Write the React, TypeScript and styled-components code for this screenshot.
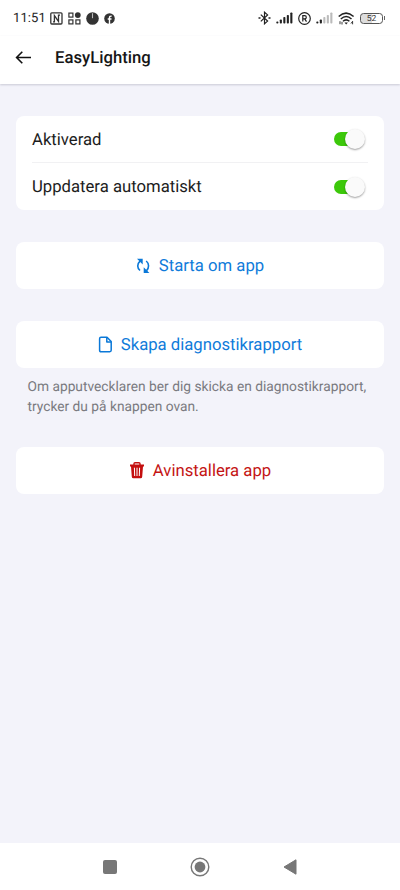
import React from "react";
import styled, { createGlobalStyle } from "styled-components";

const GlobalStyle = createGlobalStyle`
  * { box-sizing: border-box; }
  body { margin: 0; background: #f3f3fa; font-family: Roboto, "Noto Sans", sans-serif; text-rendering: geometricPrecision; }
  svg { display: block; flex: none; }
`;

const Screen = styled.div`
  display: flex;
  flex-direction: column;
  width: 100%;
  height: 890px;
  background: #f3f3fa;
`;

const StatusBar = styled.div`
  display: flex;
  justify-content: space-between;
  align-items: center;
  height: 36px;
  padding: 0 15px 0 13px;
  background: #fff;
`;

const StatusGroup = styled.div<{ $gap: number }>`
  display: flex;
  align-items: center;
  gap: ${(p) => p.$gap}px;
`;

const Clock = styled.span`
  width: 32px;
  padding-top: 1px;
  font-size: 13px;
  line-height: 16px;
  letter-spacing: 0.1px;
  color: #252525;
  white-space: nowrap;
`;

const Header = styled.header`
  display: flex;
  align-items: center;
  gap: 23px;
  height: 48px;
  padding: 0 16px 5px 15px;
  background: #fff;
  box-shadow: 0 1px 2px rgba(40, 40, 70, 0.2);
`;

const Title = styled.h1`
  margin: 0;
  padding-top: 2px;
  font-size: 16.7px;
  font-weight: 500;
  line-height: 20px;
  color: #161616;
`;

const Content = styled.main`
  flex: 1;
  display: flex;
  flex-direction: column;
  padding: 31.5px 16px 0;
`;

const Card = styled.section`
  padding: 0 16px;
  border-radius: 8px;
  background: #fff;
`;

const SettingRow = styled.div<{ $divided?: boolean }>`
  display: flex;
  align-items: center;
  justify-content: space-between;
  height: ${(p) => (p.$divided ? 48 : 46.5)}px;
  border-top: ${(p) => (p.$divided ? "1px solid #f1f1f3" : "none")};
`;

const RowLabel = styled.span`
  padding-top: 4px;
  font-size: 16.7px;
  line-height: 20px;
  color: #1c1c1c;

  ${SettingRow} + ${SettingRow} & {
    padding-top: 3px;
  }
`;

const Toggle = styled.div`
  display: flex;
  align-items: center;
  justify-content: flex-end;
  width: 31px;
  height: 14px;
  margin-right: 3px;
  border-radius: 7px;
  background: linear-gradient(90deg, #3cc80a 0 20px, transparent 20px);
`;

const Knob = styled.span`
  width: 20px;
  height: 20px;
  border-radius: 50%;
  background: #fafafa;
  box-shadow: 0 1px 2px rgba(0, 0, 0, 0.38);
`;

const ActionButton = styled.button<{ $danger?: boolean; $top: number }>`
  display: flex;
  align-items: center;
  justify-content: center;
  gap: 8px;
  height: 47px;
  margin-top: ${(p) => p.$top}px;
  padding: 0;
  border: 0;
  border-radius: 8px;
  background: #fff;
  color: ${(p) => (p.$danger ? "#c41414" : "#0f7bda")};
  font: 400 16.7px/20px Roboto, sans-serif;
  text-rendering: inherit;
`;

const ActionLabel = styled.span`
  padding-top: 2px;
`;

const Hint = styled.p`
  margin: 9px 0 0 11.5px;
  font-size: 13.75px;
  line-height: 20px;
  color: #7a7a80;
  white-space: nowrap;
`;

const NavBar = styled.nav`
  display: grid;
  grid-template-columns: repeat(3, 90px);
  justify-content: center;
  justify-items: center;
  align-items: center;
  height: 47px;
  background: #fff;
`;

const NfcIcon = () => (
  <svg width="13" height="13" viewBox="0 0 13 13" fill="none" stroke="#333" strokeWidth="1.3">
    <rect x="0.8" y="0.8" width="11.2" height="11.2" rx="1" />
    <path d="M3 9.9h1.4V3.6l4.1 5.8V3.1H10" strokeWidth="1.3" />
  </svg>
);

const AppsIcon = () => (
  <svg width="13" height="13" viewBox="0 0 13 13" fill="none" stroke="#333" strokeWidth="1.2">
    <rect x="0.9" y="1.1" width="4" height="4" />
    <rect x="0.9" y="7.9" width="4" height="4" />
    <rect x="7.9" y="7.9" width="4" height="4" />
    <circle cx="9.8" cy="3.1" r="2.9" fill="#333" stroke="none" />
  </svg>
);

const DialIcon = () => (
  <svg width="13" height="13" viewBox="0 0 13 13">
    <circle cx="6.5" cy="6.5" r="6.3" fill="#333" />
    <path d="M6.5 1.2v5" stroke="#bbb" strokeWidth="1.1" />
  </svg>
);

const FacebookIcon = () => (
  <svg width="11" height="11" viewBox="0 0 11 11">
    <circle cx="5.5" cy="5.5" r="5.3" fill="#333" />
    <path d="M5.5 11V4.6Q5.5 3 7.7 3.1M3.7 6h3.8" fill="none" stroke="#fff" strokeWidth="1.4" />
  </svg>
);

const BluetoothIcon = () => (
  <svg width="13" height="14" viewBox="0 0 13 14" fill="none" stroke="#222" strokeWidth="1.2">
    <path d="M2.8 3.6l6.8 6.5-3.1 2.7V1.2l3.1 2.7-6.8 6.5" />
    <path d="M0.5 7h2M10.5 7h2" strokeWidth="1.7" />
  </svg>
);

const SignalIcon = ({ strength }: { strength: number }) => (
  <svg width="17" height="12" viewBox="0 0 17 12">
    {[2, 4, 6.5, 8.5, 11].map((h, i) => (
      <rect key={h} x={0.3 + i * 3.5} y={11.5 - h} width="2.1" height={h} rx="0.8" fill={i < strength ? "#222" : "#bbb"} />
    ))}
  </svg>
);

const RegisteredIcon = () => (
  <svg width="13" height="13" viewBox="0 0 13 13" fill="none" stroke="#222">
    <circle cx="6.5" cy="6.5" r="5.8" strokeWidth="1.2" />
    <path d="M4.8 9.6V3.7h1.9a1.6 1.6 0 0 1 0 3.2H4.8M6.7 6.9l1.8 2.7" strokeWidth="1.2" />
  </svg>
);

const WifiIcon = () => (
  <svg width="17" height="13" viewBox="0 0 17 13" fill="none" stroke="#222" strokeWidth="1.5">
    <path d="M0.7 4.5Q8 -2.2 15.6 4.5M2.8 7Q8.2 2 13.5 7M5 9.3q3.2-2.8 6.4 0" />
    <path d="M6.5 10.5h3.4l-1.7 2z" fill="#222" stroke="none" />
    <path d="M2 9.2v3M4 9.8v2.7M13 11.5l1.6-2.2v3" strokeWidth="0.9" />
  </svg>
);

const BatteryFrame = styled.div`
  display: flex;
  align-items: center;
  gap: 1px;
`;

const BatteryBody = styled.span`
  width: 23px;
  height: 11px;
  border: 1px solid #555;
  border-radius: 3.5px;
  background: linear-gradient(90deg, #ddd 52%, #fff 52%);
  color: #333;
  font-size: 8.5px;
  line-height: 10px;
  text-align: center;
`;

const BatteryTip = styled.span`
  width: 1px;
  height: 4px;
  background: #666;
`;

const BackIcon = () => (
  <svg width="17" height="14" viewBox="0 0 17 14" fill="none" stroke="#111" strokeWidth="1.6">
    <path d="M16 6.5H1.8M7.3 .8L1.6 6.5l5.7 5.7" />
  </svg>
);

const RestartIcon = () => (
  <svg width="15" height="16" viewBox="0 0 15 16" fill="none" stroke="#0a78d8" strokeWidth="1.6">
    <path d="M4 12.5C1 10 1 6 4 3.2M10.2 3c3.1 2.5 3.1 7 0.2 9.8" />
    <path d="M1 .8h5.7v5.7zM13.4 15H7.7V9.3z" fill="#0a78d8" stroke="none" />
  </svg>
);

const DocumentIcon = () => (
  <svg width="15" height="17" viewBox="0 0 15 17" fill="none" stroke="#0a78d8" strokeWidth="1.5" strokeLinejoin="round">
    <path d="M3 1.3h6l4.2 4.3v8.7q0 1.4-1.4 1.4H3q-1.4 0-1.4-1.4V2.7Q1.6 1.3 3 1.3z" />
    <path d="M8.8 1.5V6H13" />
  </svg>
);

const TrashIcon = () => (
  <svg width="16" height="17" viewBox="0 0 16 17">
    <path d="M5 3V1.7Q5 .8 6 .8h4q1 0 1 .9V3" fill="none" stroke="#c40f0f" strokeWidth="1.4" />
    <path d="M1 2.5h14v1.9h-1l-.8 10.4q-.1 1.5-1.6 1.5H4.4q-1.5 0-1.6-1.5L2 4.4H1z" fill="#c40f0f" />
    <path d="M5.4 5.7l.3 8.3M8 5.7V14M10.6 5.7l-.3 8.3" stroke="#fff" strokeWidth="1" />
  </svg>
);

const RecentsIcon = () => (
  <svg width="14" height="14" viewBox="0 0 14 14"><rect width="14" height="14" rx="2" fill="#777" /></svg>
);

const HomeIcon = () => (
  <svg width="20" height="20" viewBox="0 0 20 20">
    <circle cx="10" cy="10" r="8.8" fill="none" stroke="#777" strokeWidth="1.4" />
    <circle cx="10" cy="10" r="5.4" fill="#777" />
  </svg>
);

const NavBackIcon = () => (
  <svg width="14" height="16" viewBox="0 0 14 16">
    <path d="M1 8L13 .8v14.4z" fill="#777" stroke="#777" strokeLinejoin="round" />
  </svg>
);

const settings = ["Aktiverad", "Uppdatera automatiskt"];

export default function App() {
  return (
    <>
      <GlobalStyle />
      <Screen>
        <StatusBar>
          <StatusGroup $gap={5}>
            <Clock>11:51</Clock>
            <NfcIcon />
            <AppsIcon />
            <DialIcon />
            <FacebookIcon />
          </StatusGroup>
          <StatusGroup $gap={5}>
            <BluetoothIcon />
            <SignalIcon strength={5} />
            <RegisteredIcon />
            <SignalIcon strength={2} />
            <WifiIcon />
            <BatteryFrame>
              <BatteryBody>52</BatteryBody>
              <BatteryTip />
            </BatteryFrame>
          </StatusGroup>
        </StatusBar>
        <Header>
          <BackIcon />
          <Title>EasyLighting</Title>
        </Header>
        <Content>
          <Card>
            {settings.map((label, i) => (
              <SettingRow key={label} $divided={i > 0}>
                <RowLabel>{label}</RowLabel>
                <Toggle role="switch" aria-checked="true">
                  <Knob />
                </Toggle>
              </SettingRow>
            ))}
          </Card>
          <ActionButton $top={32}>
            <RestartIcon />
            <ActionLabel>Starta om app</ActionLabel>
          </ActionButton>
          <ActionButton $top={32}>
            <DocumentIcon />
            <ActionLabel>Skapa diagnostikrapport</ActionLabel>
          </ActionButton>
          <Hint>
            Om apputvecklaren ber dig skicka en diagnostikrapport,
            <br />
            trycker du på knappen ovan.
          </Hint>
          <ActionButton $top={30} $danger>
            <TrashIcon />
            <ActionLabel>Avinstallera app</ActionLabel>
          </ActionButton>
        </Content>
        <NavBar>
          <RecentsIcon />
          <HomeIcon />
          <NavBackIcon />
        </NavBar>
      </Screen>
    </>
  );
}
